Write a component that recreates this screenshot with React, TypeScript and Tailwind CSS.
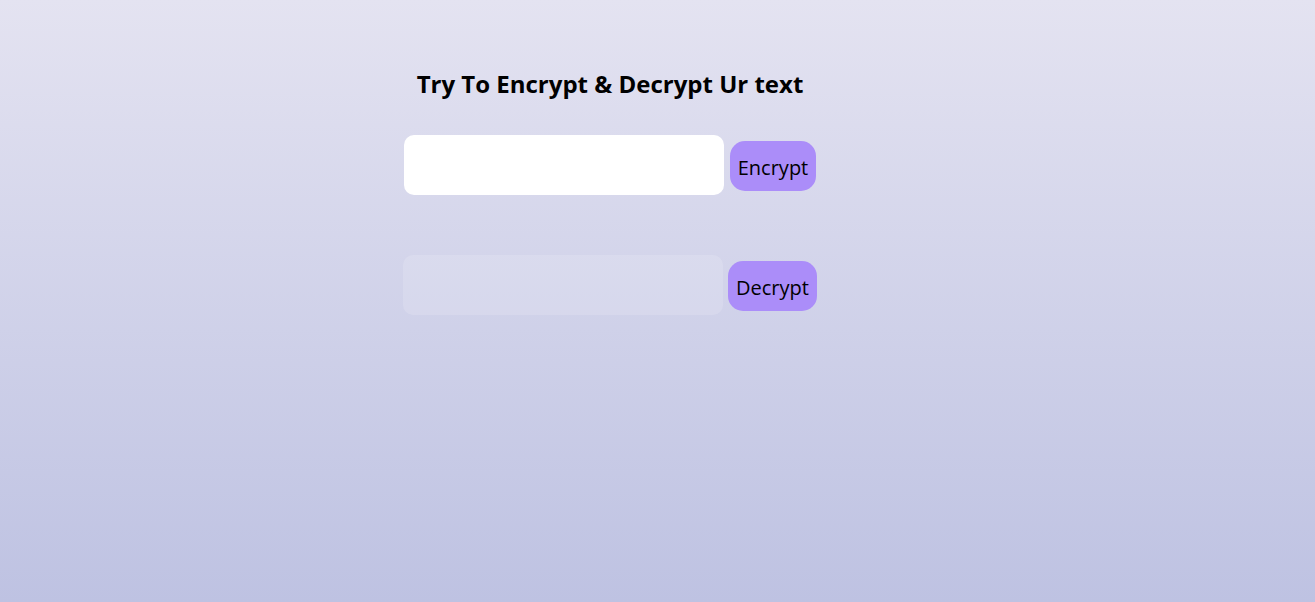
import React from "react";

export default function App() {
  return (
    <div
      className="min-h-[602px] w-full bg-gradient-to-b from-[#e4e3f1] to-[#bec2e2]"
      style={{ fontFamily: '"Open Sans", "Noto Sans", sans-serif' }}
    >
      <div className="w-[1220px] flex flex-col items-center pt-[68px]">
        <h1 className="text-[24px] font-bold text-black leading-[32px] mb-[35px]">
          Try To Encrypt &amp; Decrypt Ur text
        </h1>
        <div className="flex items-start gap-[6px]">
          <input className="w-[320px] h-[60px] rounded-[10px] bg-white outline-none px-3" />
          <button className="mt-[6px] h-[50px] px-[8px] rounded-[15px] bg-[#ab8df9] text-[20px] text-black leading-[50px] pt-[2px]">
            Encrypt
          </button>
        </div>
        <div className="flex items-start gap-[5px] mt-[60px]">
          <input
            disabled
            className="w-[320px] h-[60px] rounded-[10px] bg-[#ffffff]/15 outline-none px-3"
          />
          <button className="mt-[6px] h-[50px] px-[8px] rounded-[15px] bg-[#ab8df9] text-[20px] text-black leading-[50px] pt-[2px]">
            Decrypt
          </button>
        </div>
      </div>
    </div>
  );
}
